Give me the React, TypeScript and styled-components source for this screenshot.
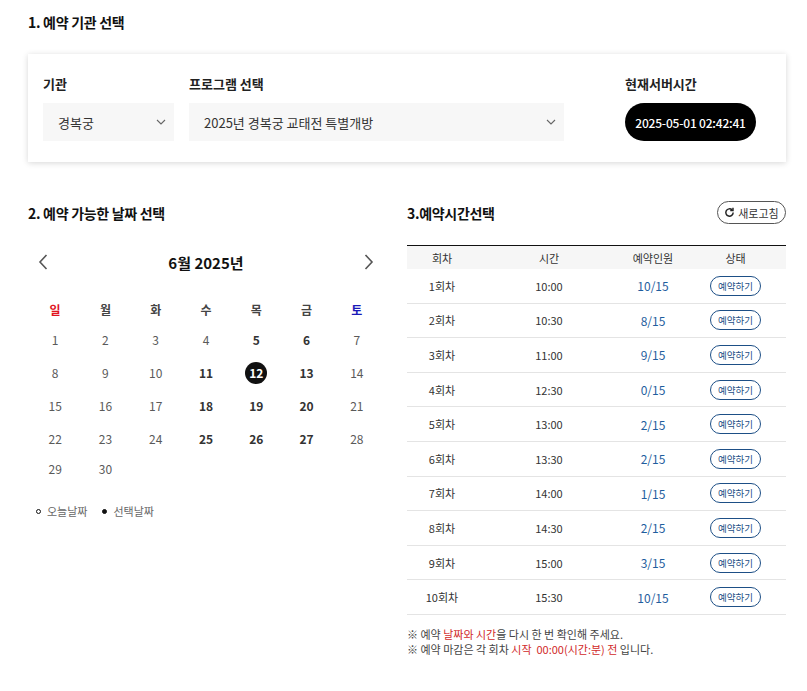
import styled, { createGlobalStyle } from "styled-components"
import { useState } from "react"

const GlobalStyle = createGlobalStyle`
  html, body {
    margin: 0;
    padding: 0;
    background: #fff;
    font-family: "Noto Sans CJK KR", "Noto Sans", sans-serif;
    color: #222;
  }
  * { box-sizing: border-box; }
`

const sessions = [
  { no: 1, time: "10:00", count: "10/15" },
  { no: 2, time: "10:30", count: "8/15" },
  { no: 3, time: "11:00", count: "9/15" },
  { no: 4, time: "12:30", count: "0/15" },
  { no: 5, time: "13:00", count: "2/15" },
  { no: 6, time: "13:30", count: "2/15" },
  { no: 7, time: "14:00", count: "1/15" },
  { no: 8, time: "14:30", count: "2/15" },
  { no: 9, time: "15:00", count: "3/15" },
  { no: 10, time: "15:30", count: "10/15" },
]

const weekdays = ["일", "월", "화", "수", "목", "금", "토"]
// days that can be booked (shown bold)
const openDays = [5, 6, 11, 12, 13, 18, 19, 20, 25, 26, 27]

function Chevron() {
  return (
    <svg width="10" height="6" viewBox="0 0 10 6" fill="none">
      <path d="M1 1l4 4 4-4" stroke="#666" strokeWidth="1.1" />
    </svg>
  )
}

function NavArrow({ dir }: { dir: "left" | "right" }) {
  return (
    <svg width="10" height="16" viewBox="0 0 10 16" fill="none">
      {dir === "left" ? (
        <path d="M8.5 1L2 8l6.5 7" stroke="#555" strokeWidth="1.6" />
      ) : (
        <path d="M1.5 1L8 8l-6.5 7" stroke="#555" strokeWidth="1.6" />
      )}
    </svg>
  )
}

function RefreshIcon() {
  return (
    <svg width="11" height="11" viewBox="0 0 12 12" fill="none">
      <path d="M10 6a4 4 0 1 1-1.2-2.85" stroke="#222" strokeWidth="1.6" />
      <path d="M9.8 0.8v3h-3" stroke="#222" strokeWidth="1.6" />
    </svg>
  )
}

export default function App() {
  const [selected, setSelected] = useState(12)

  const cells: number[] = []
  for (let d = 1; d <= 30; d++) cells.push(d)

  return (
    <>
      <GlobalStyle />
      <Page>
        <SectionTitle>1. 예약 기관 선택</SectionTitle>
        <Panel>
          <Field $width={131}>
            <Label>기관</Label>
            <Select>
              경복궁
              <Chevron />
            </Select>
          </Field>
          <Field $width={375}>
            <Label>프로그램 선택</Label>
            <Select>
              2025년 경복궁 교태전 특별개방
              <Chevron />
            </Select>
          </Field>
          <ServerField>
            <Label>현재서버시간</Label>
            <TimePill>2025-05-01 02:42:41</TimePill>
          </ServerField>
        </Panel>

        <Columns>
          <LeftColumn>
            <SectionTitle>2. 예약 가능한 날짜 선택</SectionTitle>
            <CalendarHeader>
              <NavButton>
                <NavArrow dir="left" />
              </NavButton>
              <MonthTitle>6월 2025년</MonthTitle>
              <NavButton>
                <NavArrow dir="right" />
              </NavButton>
            </CalendarHeader>
            <CalendarGrid>
              {weekdays.map((w, i) => (
                <Weekday key={w} $tone={i === 0 ? "sun" : i === 6 ? "sat" : "normal"}>
                  {w}
                </Weekday>
              ))}
              {cells.map((d) => (
                <DayCell key={d}>
                  <DayNumber
                    $open={openDays.includes(d)}
                    $selected={d === selected}
                    onClick={() => openDays.includes(d) && setSelected(d)}
                  >
                    {d}
                  </DayNumber>
                </DayCell>
              ))}
            </CalendarGrid>
            <Legend>
              <LegendItem>
                <LegendDot $filled={false} />
                오늘날짜
              </LegendItem>
              <LegendItem>
                <LegendDot $filled />
                선택날짜
              </LegendItem>
            </Legend>
          </LeftColumn>

          <RightColumn>
            <TitleRow>
              <SectionTitle>3.예약시간선택</SectionTitle>
              <RefreshButton>
                <RefreshIcon />
                새로고침
              </RefreshButton>
            </TitleRow>
            <Table>
              <HeaderRow>
                <Cell>회차</Cell>
                <Cell>시간</Cell>
                <Cell>예약인원</Cell>
                <Cell>상태</Cell>
              </HeaderRow>
              {sessions.map((s) => (
                <Row key={s.no}>
                  <Cell>{s.no}회차</Cell>
                  <Cell>{s.time}</Cell>
                  <CountCell>{s.count}</CountCell>
                  <Cell>
                    <BookButton>예약하기</BookButton>
                  </Cell>
                </Row>
              ))}
            </Table>
            <Notes>
              <p>
                ※ 예약 <Red>날짜와 시간</Red>을 다시 한 번 확인해 주세요.
              </p>
              <p>
                ※ 예약 마감은 각 회차 <Red>시작 &nbsp;00:00(시간:분) 전</Red> 입니다.
              </p>
            </Notes>
          </RightColumn>
        </Columns>
      </Page>
    </>
  )
}

const Page = styled.div`
  width: 807px;
  padding: 12px 21px 30px 28px;
`

const SectionTitle = styled.h2`
  margin: 0;
  font-size: 14px;
  font-weight: 700;
  line-height: 20px;
  color: #111;
  letter-spacing: -0.3px;
`

const Panel = styled.div`
  margin-top: 22px;
  display: flex;
  align-items: flex-start;
  gap: 15px;
  padding: 20px 30px 21px 15px;
  background: #fff;
  box-shadow: 0 1px 6px rgba(0, 0, 0, 0.16);
`

const Field = styled.div<{ $width: number }>`
  width: ${(p) => p.$width}px;
  display: flex;
  flex-direction: column;
`

const ServerField = styled.div`
  margin-left: auto;
  width: 131px;
  display: flex;
  flex-direction: column;
`

const Label = styled.div`
  font-size: 13px;
  font-weight: 700;
  color: #222;
  line-height: 20px;
  margin-bottom: 9px;
`

const Select = styled.div`
  height: 38px;
  background: #f7f7f7;
  display: flex;
  align-items: center;
  justify-content: space-between;
  padding: 0 8px 0 15px;
  font-size: 13px;
  color: #333;
`

const TimePill = styled.div`
  height: 38px;
  border-radius: 19px;
  background: #000;
  color: #fff;
  display: flex;
  align-items: center;
  justify-content: center;
  font-size: 12px;
  letter-spacing: -0.2px;
  font-weight: 500;
`

const Columns = styled.div`
  margin-top: 41px;
  display: flex;
  justify-content: space-between;
`

const LeftColumn = styled.div`
  width: 357px;
`

const RightColumn = styled.div`
  width: 379px;
`

const CalendarHeader = styled.div`
  margin-top: 23px;
  height: 32px;
  display: flex;
  align-items: center;
  justify-content: space-between;
  padding: 0 6px 0 5px;
`

const NavButton = styled.button`
  border: none;
  background: none;
  padding: 2px 5px;
  display: flex;
  cursor: pointer;
`

const MonthTitle = styled.div`
  font-size: 15px;
  font-weight: 700;
  color: #111;
`

const CalendarGrid = styled.div`
  margin-top: 17px;
  padding: 0 3px 0 2px;
  display: grid;
  grid-template-columns: repeat(7, 1fr);
  grid-template-rows: 28px repeat(4, 33px) 27px;
`

const Weekday = styled.div<{ $tone: "sun" | "sat" | "normal" }>`
  display: flex;
  align-items: center;
  justify-content: center;
  font-size: 12px;
  font-weight: 700;
  color: ${(p) => (p.$tone === "sun" ? "#e0141e" : p.$tone === "sat" ? "#1a1ab8" : "#444")};
`

const DayCell = styled.div`
  display: flex;
  align-items: center;
  justify-content: center;
`

const DayNumber = styled.span<{ $open: boolean; $selected: boolean }>`
  width: 22px;
  height: 22px;
  border-radius: 50%;
  display: flex;
  align-items: center;
  justify-content: center;
  font-size: 12px;
  font-weight: ${(p) => (p.$open ? 700 : 400)};
  color: ${(p) => (p.$selected ? "#fff" : p.$open ? "#333" : "#5a5a5a")};
  background: ${(p) => (p.$selected ? "#111" : "transparent")};
  cursor: ${(p) => (p.$open ? "pointer" : "default")};
`

const Legend = styled.div`
  margin-top: 21px;
  padding-left: 8px;
  display: flex;
  gap: 15px;
`

const LegendItem = styled.div`
  display: flex;
  align-items: center;
  gap: 6px;
  font-size: 11px;
  color: #666;
`

const LegendDot = styled.span<{ $filled: boolean }>`
  width: 5px;
  height: 5px;
  border-radius: 50%;
  border: 1px solid #111;
  background: ${(p) => (p.$filled ? "#111" : "#fff")};
`

const TitleRow = styled.div`
  display: flex;
  align-items: flex-start;
  justify-content: space-between;
`

const RefreshButton = styled.button`
  height: 23px;
  width: 69px;
  border: 1px solid #555;
  border-radius: 12px;
  background: #fff;
  display: flex;
  align-items: center;
  justify-content: center;
  gap: 3px;
  font-family: inherit;
  font-size: 11px;
  color: #333;
  padding: 0;
  cursor: pointer;
  margin-top: -2px;
`

const Table = styled.div`
  margin-top: 21px;
  border-top: 1.5px solid #111;
`

const HeaderRow = styled.div`
  display: grid;
  grid-template-columns: 70px 144px 64px 1fr;
  height: 23px;
  background: #f6f6f6;
  font-size: 11px;
  color: #333;
`

const Row = styled.div`
  display: grid;
  grid-template-columns: 70px 144px 64px 1fr;
  height: 34.6px;
  border-bottom: 1px solid #e4e4e4;
  font-size: 11px;
  color: #333;
`

const Cell = styled.div`
  display: flex;
  align-items: center;
  justify-content: center;
`

const CountCell = styled(Cell)`
  color: #1f5e9e;
  font-size: 12px;
`

const BookButton = styled.button`
  width: 51px;
  height: 20px;
  border: 1px solid #1d4f86;
  border-radius: 10px;
  background: #fff;
  color: #1d4f86;
  font-family: inherit;
  font-size: 9.5px;
  padding: 0;
  cursor: pointer;
`

const Notes = styled.div`
  margin-top: 12px;
  font-size: 11px;
  color: #444;
  line-height: 15px;

  p {
    margin: 0;
  }
`

const Red = styled.span`
  color: #d12a2a;
`
